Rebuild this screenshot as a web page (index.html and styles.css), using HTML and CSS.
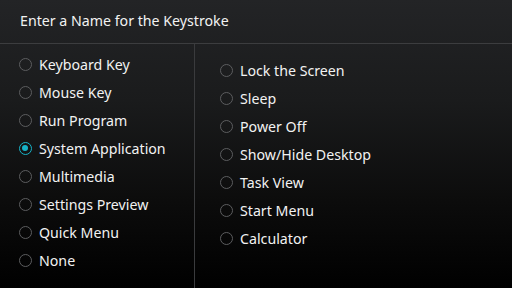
FILE: index.html
```html
<!DOCTYPE html>
<html lang="en">
<head>
    <meta charset="UTF-8">
    <title>Enter a Name for the Keystroke</title>
    <link rel="stylesheet" href="styles.css">
</head>
<body>
    <div class="dialog">
        <div class="header">Enter a Name for the Keystroke</div>
        <div class="body">
            <ul class="options left">
                <li class="option"><span class="radio"></span>Keyboard Key</li>
                <li class="option"><span class="radio"></span>Mouse Key</li>
                <li class="option"><span class="radio"></span>Run Program</li>
                <li class="option"><span class="radio checked"></span>System Application</li>
                <li class="option"><span class="radio"></span>Multimedia</li>
                <li class="option"><span class="radio"></span>Settings Preview</li>
                <li class="option"><span class="radio"></span>Quick Menu</li>
                <li class="option"><span class="radio"></span>None</li>
            </ul>
            <ul class="options right">
                <li class="option"><span class="radio"></span>Lock the Screen</li>
                <li class="option"><span class="radio"></span>Sleep</li>
                <li class="option"><span class="radio"></span>Power Off</li>
                <li class="option"><span class="radio"></span>Show/Hide Desktop</li>
                <li class="option"><span class="radio"></span>Task View</li>
                <li class="option"><span class="radio"></span>Start Menu</li>
                <li class="option"><span class="radio"></span>Calculator</li>
            </ul>
        </div>
    </div>
</body>
</html>
```

FILE: styles.css
```css
* {
    margin: 0;
    padding: 0;
    box-sizing: border-box;
}

body {
    width: 512px;
    height: 288px;
    overflow: hidden;
    font-family: 'Noto Sans', 'Open Sans', sans-serif;
    color: #f2f2f2;
    background: #000;
}

.dialog {
    width: 512px;
    height: 288px;
    display: flex;
    flex-direction: column;
    background: linear-gradient(180deg, #232426 0%, #1a1b1c 35%, #0c0c0c 70%, #000 100%);
}

.header {
    height: 44px;
    padding: 0 20px 2px;
    display: flex;
    align-items: center;
    font-size: 14.2px;
    border-bottom: 1px solid #3c3d3f;
}

.body {
    flex: 1;
    display: flex;
}

.options {
    list-style: none;
}

.left {
    width: 195px;
    border-right: 1px solid #3a3b3d;
    padding: 6px 0 0 19px;
}

.right {
    padding: 12px 0 0 25px;
}

.option {
    height: 28px;
    display: flex;
    align-items: center;
    gap: 7px;
    font-size: 14.2px;
}

.radio {
    width: 13px;
    height: 13px;
    border: 1.5px solid #5c5d5f;
    border-radius: 50%;
    position: relative;
    flex-shrink: 0;
}

.radio.checked {
    border-color: #17b3c8;
}

.radio.checked::after {
    content: '';
    position: absolute;
    left: 2px;
    top: 2px;
    width: 6px;
    height: 6px;
    border-radius: 50%;
    background: #17b3c8;
}
```
